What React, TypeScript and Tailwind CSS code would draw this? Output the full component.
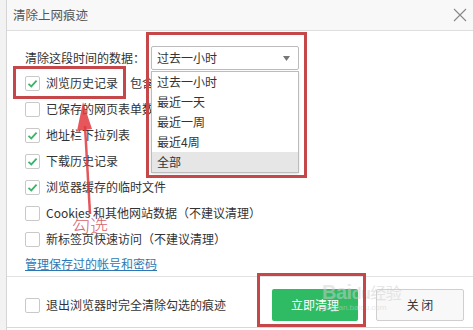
import React from "react";

const font = {fontFamily: '"Noto Sans CJK SC", "Noto Sans", sans-serif'};

const Check = ({checked}: {checked?: boolean}) => (
  <div className="w-[15px] h-[15px] border border-[#c9c9c9] rounded-[2px] bg-white flex items-center justify-center shrink-0">
    {checked && (
      <svg width="11" height="11" viewBox="0 0 11 11">
        <path d="M1.5 5.8 L4.3 8.4 L9.6 2.6" fill="none" stroke="#3db36b" strokeWidth="1.8"/>
      </svg>
    )}
  </div>
);

const Row = ({label, checked, extra}: {label: string; checked?: boolean; extra?: string}) => (
  <div className="h-[26px] flex items-center gap-[6px]">
    <Check checked={checked}/>
    <span>{label}</span>
    {extra && <span className="ml-[6px] whitespace-nowrap">{extra}</span>}
  </div>
);

const options = ["过去一小时", "最近一天", "最近一周", "最近4周", "全部"];

export default function App() {
  return (
    <div className="relative w-[473px] h-[330px] bg-white overflow-hidden text-[12px] text-[#333]" style={font}>
      <div className="flex h-full">
        <div className="w-[7px] bg-[#f2f2f2] border-r border-[#d5d5d5] shrink-0"/>
        <div className="flex-1 flex flex-col">
          <div className="h-[31px] bg-[#f8f8f8] border-b border-[#dedede] flex items-center justify-between pl-[6px] pr-[6px]">
            <span className="text-[12.5px] text-[#555]">清除上网痕迹</span>
            <svg width="14" height="14" viewBox="0 0 14 14">
              <path d="M1 1 L13 13 M13 1 L1 13" stroke="#888" strokeWidth="1.1"/>
            </svg>
          </div>

          <div className="pl-[18px] pt-[15px] border-b border-[#e2e2e2] h-[246px]">
            <div className="h-[24px] flex items-center">
              <span className="w-[126px]">清除这段时间的数据：</span>
              <div className="w-[148px] h-[24px] border border-[#bcbcbc] rounded-[2px] flex">
                <div className="flex-1 flex items-center pl-[5px]">过去一小时</div>
                <div className="w-[23px] flex items-center justify-center">
                  <svg width="7" height="5" viewBox="0 0 7 5"><path d="M0 0 L7 0 L3.5 5 Z" fill="#777"/></svg>
                </div>
              </div>
            </div>
            <Row label="浏览历史记录" checked extra="包含"/>
            <Row label="已保存的网页表单数据"/>
            <Row label="地址栏下拉列表" checked/>
            <Row label="下载历史记录" checked/>
            <Row label="浏览器缓存的临时文件" checked/>
            <Row label="Cookies 和其他网站数据（不建议清理）"/>
            <Row label="新标签页快速访问（不建议清理）"/>
            <div className="h-[24px] flex items-center">
              <span className="text-[#2b78b5] underline">管理保存过的帐号和密码</span>
            </div>
          </div>

          <div className="h-[51px] border-b border-[#d8d8d8] flex items-start pt-[12px] pl-[18px] pr-[9px]">
            <div className="h-[32px] flex items-center gap-[6px]">
              <Check/>
              <span>退出浏览器时完全清除勾选的痕迹</span>
            </div>
            <div className="ml-auto flex gap-[18px]">
              <button className="w-[86px] h-[32px] bg-[#2fbb63] text-white rounded-[2px]">立即清理</button>
              <button className="w-[88px] h-[32px] bg-[#f8f8f8] border border-[#cfcfcf] rounded-[2px] text-[#333]">关 闭</button>
            </div>
          </div>
        </div>
      </div>

      {/* dropdown list */}
      <div className="absolute left-[151px] top-[71px] w-[148px] h-[102px] bg-white border border-[#bcbcbc] shadow-sm flex flex-col">
        {options.map((o, i) => (
          <div key={o} className={`h-[20px] flex items-center pl-[5px] ${i === 4 ? "bg-[#e6e6e6]" : ""}`}>{o}</div>
        ))}
      </div>

      {/* watermark */}
      <div className="absolute left-[322px] top-[282px] text-[#d0d0d0] opacity-50 leading-none pointer-events-none">
        <div className="text-[20px] font-bold tracking-tight" style={{fontFamily: '"Liberation Sans", sans-serif'}}>Bai<span className="text-[16px]">du</span><span className="text-[16px] font-normal" style={font}>经验</span></div>
        <div className="text-[8px] mt-[2px]" style={{fontFamily: '"Liberation Sans", sans-serif'}}>jingyan.baidu.com</div>
      </div>

      {/* annotation boxes */}
      <div className="absolute left-[13px] top-[66px] w-[113px] h-[33px] border-[3px] border-[#c5474a]"/>
      <div className="absolute left-[146px] top-[32px] w-[161px] h-[146px] border-[3px] border-[#c5474a]"/>
      <div className="absolute left-[257px] top-[273px] w-[109px] h-[54px] border-[3px] border-[#c5474a]"/>

      {/* arrow */}
      <svg className="absolute left-0 top-0" width="473" height="330">
        <path d="M90 214 L85 126" stroke="#e0393e" strokeWidth="2.5" opacity="0.85"/>
        <path d="M83 102 L77 131 L92 129 Z" fill="#e0393e" opacity="0.85"/>
      </svg>
      <div className="absolute left-[72px] top-[216px] text-[18px] leading-none text-[#d9636a] font-light">勾选</div>
    </div>
  );
}
